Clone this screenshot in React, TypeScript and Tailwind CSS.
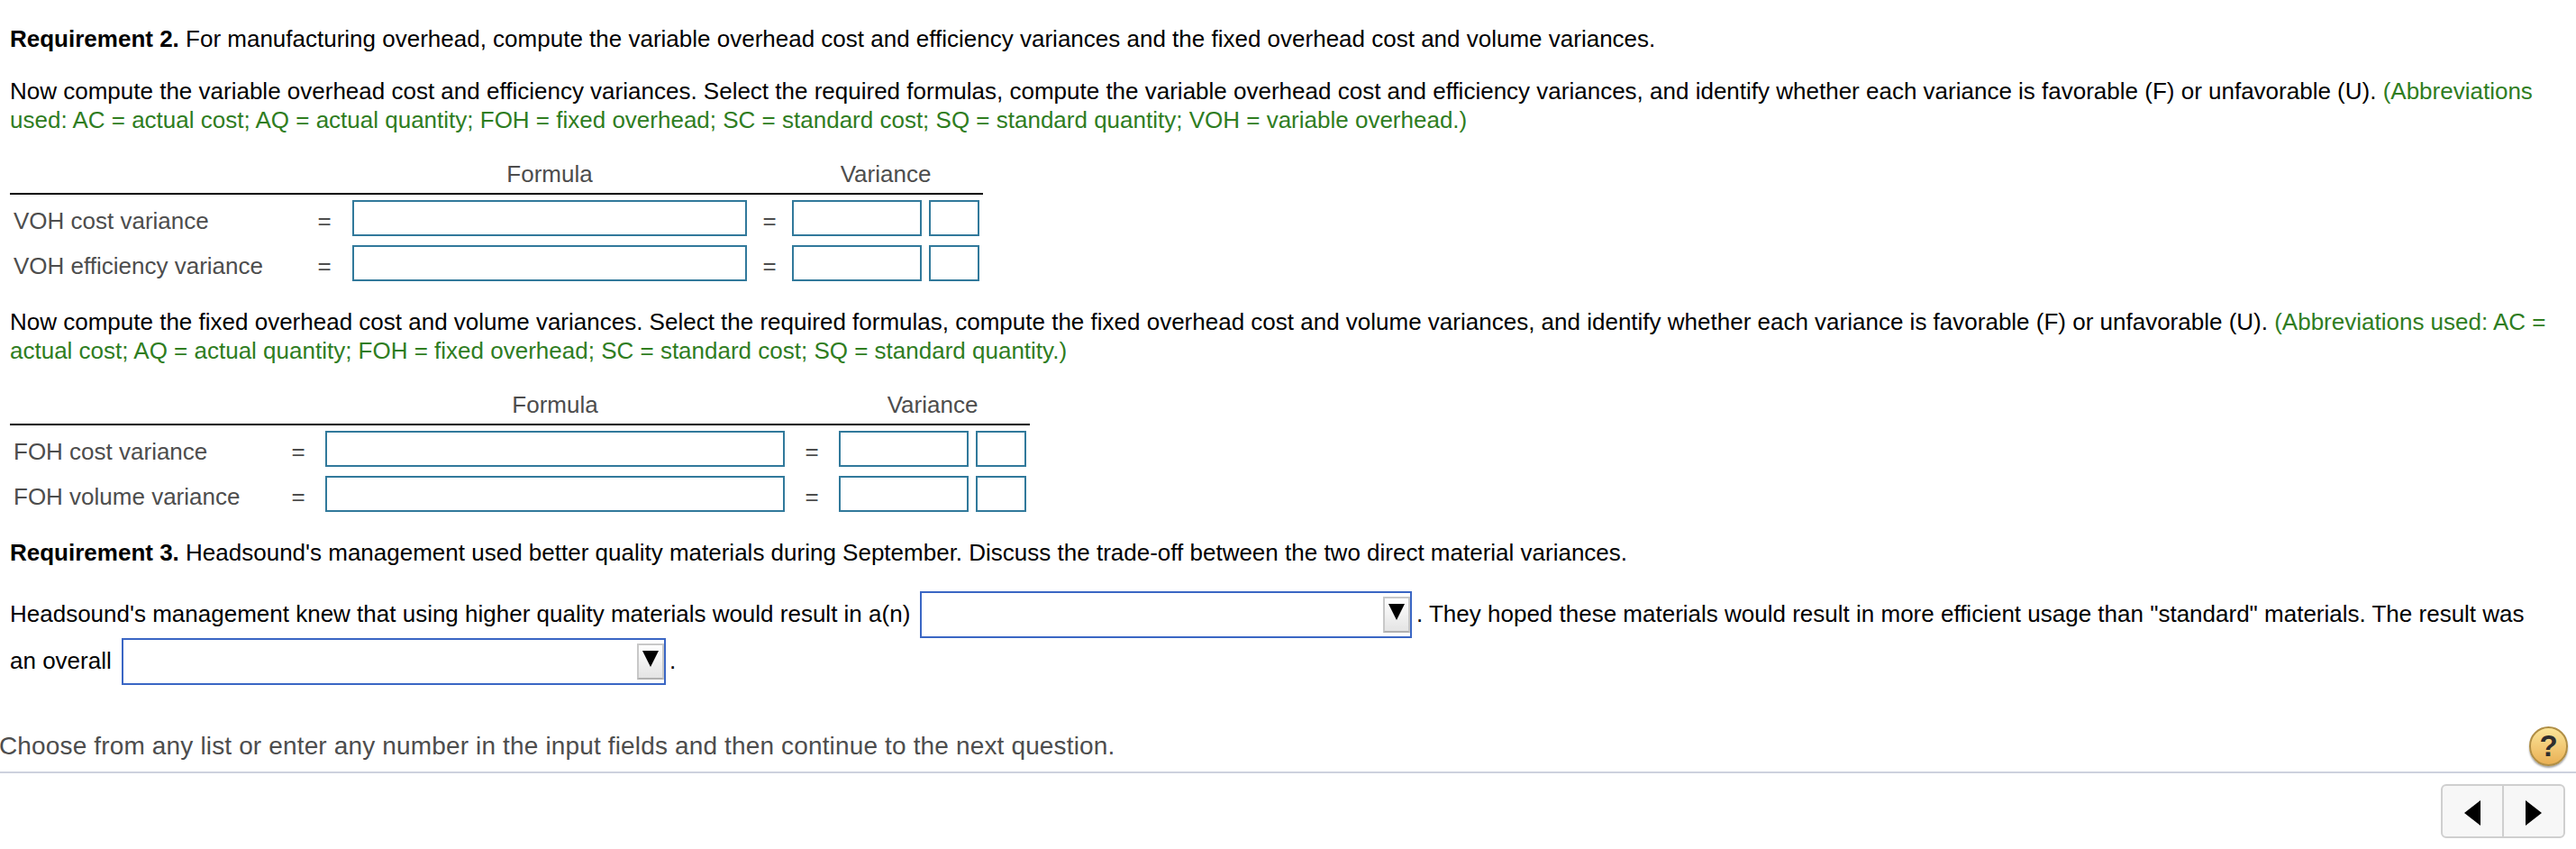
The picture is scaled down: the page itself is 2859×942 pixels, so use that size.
import type { ReactNode } from 'react';

interface VarianceTableProps {
  labels: string[];
  labelCol: string;
  equalsCol: string;
  formulaCol: string;
  gapCol: string;
}

function VarianceTable({ labels, labelCol, equalsCol, formulaCol, gapCol }: VarianceTableProps) {
  return (
    <div className="mt-7 w-fit text-[#4d4d4d]">
      <div className="flex h-[39px] border-b-2 border-black pr-1">
        <div className={labelCol} />
        <div className={equalsCol} />
        <div className={`${formulaCol} text-center`}>Formula</div>
        <div className={gapCol} />
        <div className="w-[208px] text-center">Variance</div>
      </div>
      <div className="flex flex-col gap-2.5 pt-1.5">
        {labels.map((label) => (
          <div key={label} className="flex h-10">
            <div className={`${labelCol} pt-[7px] pl-1`}>{label}</div>
            <div className={`${equalsCol} pt-[7px] text-center`}>=</div>
            <input className={`${formulaCol} h-10 border-2 border-[#31799b] bg-white outline-none`} />
            <div className={`${gapCol} pt-[7px] text-center`}>=</div>
            <input className="h-10 w-36 border-2 border-[#31799b] bg-white outline-none" />
            <input className="ml-2 h-10 w-14 border-2 border-[#31799b] bg-white outline-none" />
          </div>
        ))}
      </div>
    </div>
  );
}

function Dropdown({ width }: { width: string }) {
  return (
    <div className={`${width} flex h-[52px] shrink-0 justify-end border-2 border-[#3a66c4] bg-white pt-1`}>
      <button className="flex h-10 w-[30px] justify-center border-2 border-[#c8c8c8] border-b-[#b0b0b0] bg-linear-to-b from-white to-[#e4e4e4] pt-1.5">
        <svg width="18" height="18" viewBox="0 0 18 18">
          <path d="M0 0H18L9 18Z" fill="#000" />
        </svg>
      </button>
    </div>
  );
}

function Note({ children }: { children: ReactNode }) {
  return <span className="text-[#2f7d1f]">{children}</span>;
}

export default function App() {
  return (
    <div className="h-[942px] w-[2859px] overflow-hidden bg-white font-['Liberation_Sans',Arial,sans-serif] text-[26px] leading-8 text-black">
      <div className="pt-[27px] pl-[11px] whitespace-nowrap">
        <p>
          <b>Requirement 2.</b> For manufacturing overhead, compute the variable overhead cost and efficiency variances and the fixed overhead cost and volume variances.
        </p>

        <p className="mt-[26px]">
          Now compute the variable overhead cost and efficiency variances. Select the required formulas, compute the variable overhead cost and efficiency variances, and identify whether each variance is favorable (F) or unfavorable (U). <Note>(Abbreviations<br />
          used: AC = actual cost; AQ = actual quantity; FOH = fixed overhead; SC = standard cost; SQ = standard quantity; VOH = variable overhead.)</Note>
        </p>

        <VarianceTable
          labels={['VOH cost variance', 'VOH efficiency variance']}
          labelCol="w-[318px]"
          equalsCol="w-[62px]"
          formulaCol="w-[438px]"
          gapCol="w-[50px]"
        />

        <p className="mt-[29px]">
          Now compute the fixed overhead cost and volume variances. Select the required formulas, compute the fixed overhead cost and volume variances, and identify whether each variance is favorable (F) or unfavorable (U). <Note>(Abbreviations used: AC =<br />
          actual cost; AQ = actual quantity; FOH = fixed overhead; SC = standard cost; SQ = standard quantity.)</Note>
        </p>

        <VarianceTable
          labels={['FOH cost variance', 'FOH volume variance']}
          labelCol="w-[290px]"
          equalsCol="w-[60px]"
          formulaCol="w-[510px]"
          gapCol="w-[60px]"
        />

        <p className="mt-[29px]">
          <b>Requirement 3.</b> Headsound's management used better quality materials during September. Discuss the trade-off between the two direct material variances.
        </p>

        <div className="mt-[27px] flex h-[52px]">
          <span className="w-[1010px] pt-[9px]">Headsound's management knew that using higher quality materials would result in a(n)</span>
          <Dropdown width="w-[546px]" />
          <span className="pt-[9px] pl-[5px]">. They hoped these materials would result in more efficient usage than "standard" materials. The result was</span>
        </div>
        <div className="flex h-[52px]">
          <span className="w-[124px] pt-[9px]">an overall</span>
          <Dropdown width="w-[604px]" />
          <span className="pt-[9px] pl-1">.</span>
        </div>
      </div>

      {/* Hint bar */}
      <div className="flex h-[98px] justify-between border-b-2 border-[#cdd1de] pr-[9px]">
        <p className="-ml-px pt-[52px] text-[28px] leading-8 tracking-[0.15px] whitespace-nowrap text-[#4d4d4d]">
          Choose from any list or enter any number in the input fields and then continue to the next question.
        </p>
        <button className="mt-[46px] flex h-11 w-[43px] items-center justify-center rounded-full border-2 border-[#b08e45] bg-linear-to-b from-[#fbe598] to-[#e9b054] text-[33px] font-bold text-[#2e2e2e] shadow-[0_2px_2px_rgba(0,0,0,0.35)]">
          ?
        </button>
      </div>

      {/* Question navigation */}
      <div className="flex justify-end pt-3 pr-3">
        <div className="flex h-[60px] w-[138px] rounded-md border-2 border-[#cfcfcf] bg-[#f7f7f7]">
          <button className="flex w-[66px] items-center justify-center">
            <svg width="18" height="28" viewBox="0 0 18 28" className="mt-1">
              <path d="M18 0V28L0 14Z" fill="#000" />
            </svg>
          </button>
          <button className="flex w-[68px] items-center justify-center border-l-2 border-[#cfcfcf]">
            <svg width="18" height="28" viewBox="0 0 18 28" className="mt-1">
              <path d="M0 0V28L18 14Z" fill="#000" />
            </svg>
          </button>
        </div>
      </div>
    </div>
  );
}
